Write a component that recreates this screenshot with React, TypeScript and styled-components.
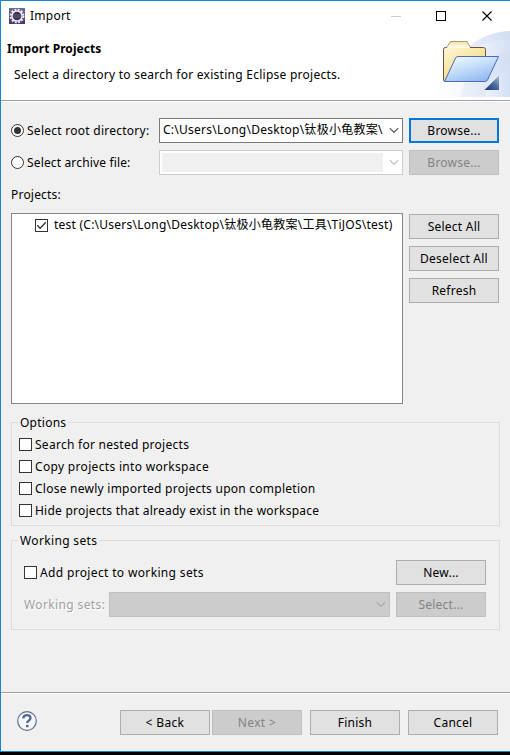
import React from "react";
import styled, { createGlobalStyle, css } from "styled-components";

const GlobalStyle = createGlobalStyle`
  * { box-sizing: border-box; }
  html, body { margin: 0; padding: 0; background: #000; overflow: hidden; }
`;

const Dialog = styled.div`
  display: flex;
  flex-direction: column;
  width: 510px;
  height: 752px;
  background: #f0f0f0;
  border: 1px solid #1883d7;
  border-right: 0;
  color: #000;
  font: 12px/18px "Noto Sans", "Noto Sans CJK SC", sans-serif;
`;

const Text = styled.span<{ $track?: number }>`
  white-space: pre;
  letter-spacing: ${(p) => p.$track ?? 0.24}px;
`;

const TitleBar = styled.div`
  display: flex;
  align-items: center;
  flex: 0 0 30px;
  padding-left: 8px;
  background: #fff;
`;
const Title = styled(Text)`
  flex: 1;
  margin-left: 5px;
`;
const WindowControls = styled.div`
  display: flex;
  svg { display: block; }
`;

const Header = styled.header`
  display: flex;
  justify-content: space-between;
  flex: 0 0 71px;
  background: #fff;
  border-bottom: 1px solid #fff;
  box-shadow: inset 0 -1px #a0a0a0;
`;
const HeaderText = styled.div`
  display: flex;
  flex-direction: column;
  padding: 9px 0 0 6px;
`;
const Heading = styled(Text)`
  font-weight: 700;
`;
const Description = styled(Text)`
  margin: 8px 0 0 7px;
`;

const Body = styled.main`
  display: flex;
  flex-direction: column;
  flex: 1;
  padding: 16px 10px 0;
`;
const SourceRow = styled.div`
  display: grid;
  grid-template-columns: 148px 244px 90px;
  column-gap: 0;
  align-items: center;
  height: 25px;
  margin-bottom: 7px;
  button { margin-left: 6px; }
`;
const Choice = styled.label`
  display: flex;
  align-items: center;
  gap: 3px;
`;
const Radio = styled.span<{ $on?: boolean }>`
  display: flex;
  width: 13px;
  height: 13px;
  padding: 2px;
  border: 1px solid #333;
  border-radius: 50%;
  background: #fff;
  &::after {
    content: "";
    flex: 1;
    border-radius: 50%;
    background: ${(p) => (p.$on ? "#333" : "transparent")};
  }
`;
const Box = styled.span`
  display: block;
  flex: 0 0 13px;
  height: 13px;
  border: 1px solid #333;
  background: #fff;
  svg { display: block; }
`;

const Combo = styled.div<{ $tone: "normal" | "disabled" | "filled" }>`
  display: flex;
  align-items: center;
  height: 25px;
  padding: 2px 3px 2px 2px;
  overflow: hidden;
  border: 1px solid #7a7a7a;
  background: #fff;
  ${(p) => p.$tone === "disabled" && css`border-color: #ccc;`}
  ${(p) => p.$tone === "filled" && css`border-color: #bfbfbf; background: #ccc;`}
  svg { flex: none; }
`;
const ComboField = styled.div<{ $muted?: boolean }>`
  flex: 1;
  min-width: 0;
  height: 19px;
  margin-right: 6px;
  padding-left: 1px;
  overflow: hidden;
  line-height: 18px;
  background: ${(p) => (p.$muted ? "#f0f0f0" : "transparent")};
`;

const Button = styled.button<{ $focus?: boolean }>`
  display: flex;
  align-items: center;
  justify-content: center;
  flex: none;
  width: 90px;
  height: 25px;
  padding: 0;
  border: ${(p) => (p.$focus ? "2px solid #0078d7" : "1px solid #adadad")};
  border-radius: 0;
  background: #e1e1e1;
  color: #000;
  font: inherit;
  &:disabled {
    border-color: #bfbfbf;
    background: #ccc;
    color: #838383;
  }
`;

const ProjectsLabel = styled(Text)`
  margin-top: 4px;
`;
const ProjectsRow = styled.div`
  display: flex;
  gap: 6px;
  margin-top: 9px;
`;
const ProjectList = styled.div`
  width: 392px;
  height: 191px;
  padding: 1px 0 0 23px;
  border: 1px solid #828790;
  background: #fff;
`;
const ProjectItem = styled.div`
  display: flex;
  align-items: center;
  gap: 6px;
  height: 20px;
`;
const ButtonStack = styled.div`
  display: flex;
  flex-direction: column;
  gap: 7px;
  padding-top: 1px;
`;

const Group = styled.fieldset<{ $h: number; $top: number }>`
  display: flex;
  flex-direction: column;
  width: 489px;
  height: ${(p) => p.$h}px;
  margin: ${(p) => p.$top}px 0 0;
  padding: 0;
  border: 1px solid #dcdcdc;
`;
const Legend = styled.legend`
  height: 18px;
  margin-left: 6px;
  padding: 0 2px;
  line-height: 20px;
`;
const Options = styled.div`
  display: flex;
  flex-direction: column;
  gap: 4px;
  padding: 4px 0 0 7px;
  label { height: 18px; }
  ${Text} { padding-top: 2px; }
`;
const SetGrid = styled.div`
  display: grid;
  grid-template-columns: 85px 281px 90px;
  row-gap: 7px;
  align-items: center;
  padding: 11px 0 0 12px;
  label { grid-column: span 2; }
  button { margin-left: 6px; }
`;
const DisabledText = styled(Text)`
  color: #a0a0a0;
  text-shadow: 1px 1px #fff;
`;

const Footer = styled.footer`
  display: flex;
  align-items: center;
  flex: 0 0 59px;
  border-top: 1px solid #a0a0a0;
  padding: 1px 0 0 16px;
  box-shadow: inset 0 1px #fff;
  > svg { margin-bottom: 3px; }
`;
const FooterButtons = styled.div`
  display: flex;
  gap: 8px;
  margin-left: 83px;
`;
const Pager = styled.div`
  display: flex;
  gap: 2px;
`;

const Chevron = ({ color = "#555" }: { color?: string }) => (
  <svg width="10" height="7" viewBox="0 0 10 7" fill="none" stroke={color} strokeWidth="1.2">
    <path d="M.8 1.2 5 5.4 9.2 1.2" />
  </svg>
);

const GearIcon = () => (
  <svg width="16" height="16" viewBox="0 0 16 16">
    <defs>
      <linearGradient id="gearBg" x2="0" y2="1">
        <stop stopColor="#75679a" />
        <stop offset="1" stopColor="#49366f" />
      </linearGradient>
    </defs>
    <path fill="url(#gearBg)" d="M0 0h16v16H0z" />
    <circle cx="8" cy="8" r="6.5" fill="none" stroke="#e9e6ef" strokeWidth="1.8" strokeDasharray="2 1.4" />
    <circle cx="8" cy="8" r="5.1" fill="#38324e" stroke="#f1eff5" strokeWidth="1.5" />
    <path d="M4 7h8M4.2 9h7.600" stroke="#665e80" />
  </svg>
);

const FolderBanner = () => (
  <svg width="76" height="66" viewBox="434 31 76 66">
    <defs>
      <linearGradient id="haze" x1="0" x2="1">
        <stop stopColor="#fafbff" />
        <stop offset="1" stopColor="#d3def4" />
      </linearGradient>
      <linearGradient id="haze2" x1="0" x2="1">
        <stop stopColor="#fff" stopOpacity=".8" />
        <stop offset="1" stopColor="#fff" stopOpacity=".05" />
      </linearGradient>
      <linearGradient id="back" x1="0" y1="0" x2=".7" y2="1">
        <stop stopColor="#fff6d8" />
        <stop offset="1" stopColor="#f0d56c" />
      </linearGradient>
      <linearGradient id="tab" y2="1" x2="0">
        <stop stopColor="#f2dfa0" />
        <stop offset="1" stopColor="#fffef0" />
      </linearGradient>
      <linearGradient id="front" x1=".1" y1="0" x2=".7" y2="1">
        <stop stopColor="#f2faff" />
        <stop offset=".45" stopColor="#c6e0fb" />
        <stop offset="1" stopColor="#8fb8ee" />
      </linearGradient>
      <linearGradient id="corner" x1="0" y1="1" x2="1" y2="0">
        <stop stopColor="#16386f" />
        <stop offset=".5" stopColor="#47689d" />
        <stop offset="1" stopColor="#a9bedd" />
      </linearGradient>
    </defs>
    <path fill="url(#haze)" d="M435 97c1-13 8-23 20-29 7-21 28-36 55-37v66z" />
    <path fill="url(#haze2)" d="M455 68c12-19 35-29 55-28v12c-25 3-44 18-50 45h-25c1-13 8-23 20-29z" />
    <path fill="url(#haze2)" d="M485 97c1-14 11-23 25-27v27z" opacity=".5" />
    <path d="M446.500 47.500 450.500 41.500H467L470.500 47.500" fill="url(#tab)" stroke="#ad9a70" />
    <path d="M443.500 49.500q0-2 2-2h38q2 0 2 2V80l-2 1.500h-39l-1-1.500z" fill="url(#back)" stroke="#75503f" />
    <path d="M447 47.500h23" stroke="#fffbe0" />
    <path d="M444.500 81.500 455.500 58q.8-1.500 2.500-1.500h40.500L487.500 80q-.8 1.500-2.500 1.500z" fill="url(#front)" stroke="#5068b8" strokeLinejoin="round" />
    <path d="M484.500 90H499V75.500z" fill="url(#corner)" />
  </svg>
);

const HelpIcon = () => (
  <svg width="20" height="20" viewBox="0 0 20 20" fill="none">
    <circle cx="10" cy="10" r="9.300" fill="#f5f7fb" stroke="#5d7092" strokeWidth="1.200" />
    <path d="M6.300 7.300C6.500 5 7.900 4.200 10 4.200c2.200 0 3.500 1.100 3.500 2.800 0 2.500-3.200 2.600-3.300 5" stroke="#54678e" strokeWidth="2.300" />
    <path d="M9 13.800h2.500v2.400H9z" fill="#54678e" />
  </svg>
);

const options: [string, number][] = [
  ["Search for nested projects", 0.27],
  ["Copy projects into workspace", 0.32],
  ["Close newly imported projects upon completion", 0.25],
  ["Hide projects that already exist in the workspace", 0.23],
];

export default function App() {
  return (
    <>
      <GlobalStyle />
      <Dialog>
        <TitleBar>
          <GearIcon />
          <Title>Import</Title>
          <WindowControls>
            <svg width="119" height="28" viewBox="391 1 119 28" fill="none" shapeRendering="crispEdges">
              <path d="M391 15.500h10" stroke="#ccc" />
              <path d="M436.500 10.500h9v9h-9z" stroke="#000" />
              <path d="m482.500 10.500 9 9m0-9-9 9" stroke="#000" shapeRendering="auto" strokeWidth="1.100" />
            </svg>
          </WindowControls>
        </TitleBar>
        <Header>
          <HeaderText>
            <Heading $track={0.07}>Import Projects</Heading>
            <Description $track={0.26}>Select a directory to search for existing Eclipse projects.</Description>
          </HeaderText>
          <FolderBanner />
        </Header>
        <Body>
          <SourceRow>
            <Choice><Radio $on /><Text $track={0.26}>Select root directory:</Text></Choice>
            <Combo $tone="normal">
              <ComboField><Text $track={0.26}>C:\Users\Long\Desktop\钛极小龟教案\</Text></ComboField>
              <Chevron />
            </Combo>
            <Button $focus><Text>Browse...</Text></Button>
          </SourceRow>
          <SourceRow>
            <Choice><Radio /><Text $track={0.15}>Select archive file:</Text></Choice>
            <Combo $tone="disabled"><ComboField $muted /><Chevron color="#bfbfbf" /></Combo>
            <Button disabled><Text>Browse...</Text></Button>
          </SourceRow>
          <ProjectsLabel $track={0.2}>Projects:</ProjectsLabel>
          <ProjectsRow>
            <ProjectList>
              <ProjectItem>
                <Box>
                  <svg width="11" height="11" viewBox="0 0 11 11" fill="none" stroke="#333" strokeWidth="1.300">
                    <path d="m1.300 5.300 2.800 2.900 5.700-5.900" />
                  </svg>
                </Box>
                <Text>test (C:\Users\Long\Desktop\钛极小龟教案\工具\TiJOS\test)</Text>
              </ProjectItem>
            </ProjectList>
            <ButtonStack>
              <Button><Text>Select All</Text></Button>
              <Button><Text>Deselect All</Text></Button>
              <Button><Text>Refresh</Text></Button>
            </ButtonStack>
          </ProjectsRow>
          <Group $h={113} $top={9}>
            <Legend><Text>Options</Text></Legend>
            <Options>
              {options.map(([label, track]) => (
                <Choice key={label}><Box /><Text $track={track}>{label}</Text></Choice>
              ))}
            </Options>
          </Group>
          <Group $h={99} $top={5}>
            <Legend><Text $track={0.35}>Working sets</Text></Legend>
            <SetGrid>
              <Choice><Box /><Text $track={0.35}>Add project to working sets</Text></Choice>
              <Button><Text>New...</Text></Button>
              <DisabledText $track={0.38}>Working sets:</DisabledText>
              <Combo $tone="filled"><ComboField /><Chevron color="#a8a8a8" /></Combo>
              <Button disabled><Text>Select...</Text></Button>
            </SetGrid>
          </Group>
        </Body>
        <Footer>
          <HelpIcon />
          <FooterButtons>
            <Pager>
              <Button><Text $track={0.35}>&lt; Back</Text></Button>
              <Button disabled><Text $track={0.35}>Next &gt;</Text></Button>
            </Pager>
            <Button><Text>Finish</Text></Button>
            <Button><Text>Cancel</Text></Button>
          </FooterButtons>
        </Footer>
      </Dialog>
    </>
  );
}
